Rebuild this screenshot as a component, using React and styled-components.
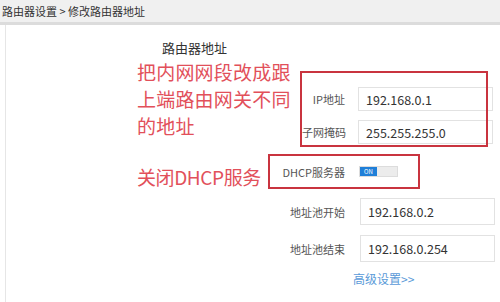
import React from "react";
import styled, { createGlobalStyle } from "styled-components";

const Global = createGlobalStyle`
  html, body {
    margin: 0;
    padding: 0;
    background: #ffffff;
    width: 500px;
    height: 302px;
    overflow: hidden;
    font-family: "Noto Sans CJK SC", "Noto Sans", sans-serif;
  }
`;

const TopBar = styled.div`
  height: 22px;
  background: #f0f0f0;
  border-bottom: 3px solid #dcdcdc;
  box-sizing: content-box;
  display: flex;
  align-items: center;
  padding-left: 2px;
  font-size: 11px;
  color: #333;
  white-space: nowrap;
`;

const Main = styled.div`
  margin-left: 5px;
  border-left: 1px solid #e6e6e6;
  height: 277px;
  padding-left: 131px;
  display: flex;
  flex-direction: column;
`;

const Heading = styled.div`
  margin: 14px 0 0 25px;
  font-size: 13px;
  line-height: 18px;
  color: #333;
`;

const Section = styled.div`
  display: flex;
  align-items: flex-start;
  margin-top: ${(p) => p.gap || 0}px;
`;

const Note = styled.div`
  width: ${(p) => p.width}px;
  margin-top: ${(p) => p.top || 0}px;
  flex-shrink: 0;
  color: #e2505a;
  font-size: 19px;
  line-height: 27px;
  white-space: pre-line;
  letter-spacing: ${(p) => p.spacing || 0.2}px;
`;

const Highlight = styled.div`
  position: relative;
  width: ${(p) => p.width}px;
  height: ${(p) => p.height}px;
  margin-top: ${(p) => p.top || 0}px;
  box-sizing: border-box;
  padding: ${(p) => p.pad || "0"};
  display: flex;
  flex-direction: column;
  justify-content: ${(p) => p.justify || "flex-start"};
  gap: 9px;
  &::after {
    content: "";
    position: absolute;
    inset: 0;
    border: 2px solid #c9343f;
    pointer-events: none;
    z-index: 1;
  }
`;

const Field = styled.div`
  display: flex;
  align-items: center;
  gap: ${(p) => p.gap || 13}px;
  margin-top: ${(p) => p.top || 0}px;
`;

const Label = styled.div`
  width: ${(p) => p.width}px;
  flex-shrink: 0;
  text-align: right;
  font-size: 11px;
  color: #555;
  white-space: nowrap;
`;

const Input = styled.div`
  width: 135px;
  height: ${(p) => p.height || 27}px;
  flex-shrink: 0;
  box-sizing: border-box;
  border: 1px solid #e2e2e2;
  background: #fff;
  display: flex;
  align-items: center;
  padding-left: 7px;
  font-size: 12.5px;
  color: #333;
`;

const Toggle = styled.div`
  width: 39px;
  height: 11px;
  display: flex;
  border: 1px solid #dcdcdc;
  background: #ececec;
  box-sizing: border-box;
`;

const ToggleOn = styled.div`
  width: 17px;
  background: #1f7fd8;
  color: #fff;
  font-size: 6px;
  line-height: 9px;
  text-align: center;
`;

const Link = styled.div`
  margin: 8px 0 0 216px;
  font-size: 12px;
  color: #5a9ad8;
`;

export default function App() {
  return (
    <>
      <Global />
      <TopBar>路由器设置 &gt; 修改路由器地址</TopBar>
      <Main>
        <Heading>路由器地址</Heading>
        <Section gap={1}>
          <Note width={163}>{"把内网网段改成跟\n上端路由网关不同\n的地址"}</Note>
          <Highlight width={188} height={76} top={13} pad="16px 0 0 2px">
            <Field>
              <Label width={43}>IP地址</Label>
              <Input height={24}>192.168.0.1</Input>
            </Field>
            <Field>
              <Label width={43}>子网掩码</Label>
              <Input height={24}>255.255.255.0</Input>
            </Field>
          </Highlight>
        </Section>
        <Section>
          <Note width={131} top={16} spacing={-0.4}>关闭DHCP服务</Note>
          <Highlight width={152} height={35} top={7} pad="0 0 0 2px" justify="center">
            <Field gap={14}>
              <Label width={75}>DHCP服务器</Label>
              <Toggle>
                <ToggleOn>ON</ToggleOn>
              </Toggle>
            </Field>
          </Highlight>
        </Section>
        <Field gap={15} top={8}>
          <Label width={208}>地址池开始</Label>
          <Input>192.168.0.2</Input>
        </Field>
        <Field gap={15} top={10}>
          <Label width={208}>地址池结束</Label>
          <Input>192.168.0.254</Input>
        </Field>
        <Link>高级设置&gt;&gt;</Link>
      </Main>
    </>
  );
}
